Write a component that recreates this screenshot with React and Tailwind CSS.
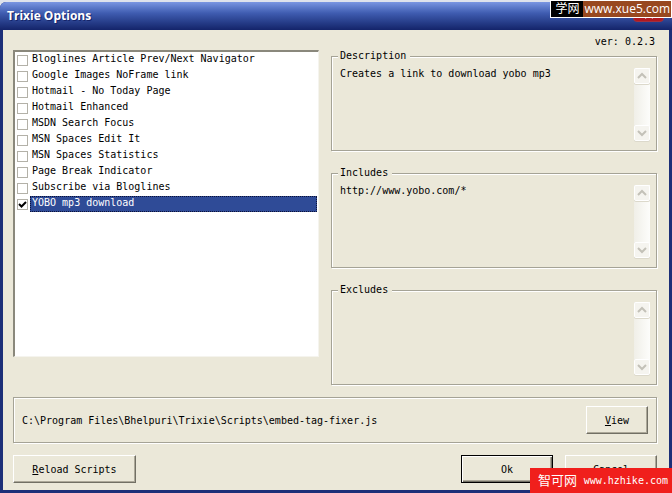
import { useState } from "react";

const SCRIPTS = [
  "Bloglines Article Prev/Next Navigator",
  "Google Images NoFrame link",
  "Hotmail - No Today Page",
  "Hotmail Enhanced",
  "MSDN Search Focus",
  "MSN Spaces Edit It",
  "MSN Spaces Statistics",
  "Page Break Indicator",
  "Subscribe via Bloglines",
  "YOBO mp3 download",
];

// Disabled scroll bar button, the arrow points up or down
function ScrollArrow({ down, label }) {
  return (
    <button
      type="button"
      disabled
      aria-label={label}
      className="flex h-4 w-4 items-center justify-center rounded-xs border border-white bg-[#f5f4ef] shadow-[0_1px_0_#dcd9cb]"
    >
      <svg width="10" height="8" viewBox="0 0 10 8" fill="none" stroke="#c3c1b8" strokeWidth="2">
        <path d={down ? "M1 2l4 4 4-4" : "M1 6l4-4 4 4"} />
      </svg>
    </button>
  );
}

/**
 * Etched group box with a read-only text and a disabled scroll bar.
 */
function GroupBox({ title, text }) {
  return (
    <fieldset className="flex-1 border border-[#a5a396] px-1.5 pb-[9px] shadow-[1px_1px_0_#fff,inset_1px_1px_0_#fff]">
      <legend className="bg-[#ebe8d9] pr-1 pl-0.5 leading-3">{title}</legend>
      <div className="flex pt-1.5 pl-0.5">
        <textarea
          readOnly
          aria-label={title}
          value={text}
          className="min-w-0 flex-1 resize-none overflow-hidden leading-3 outline-none"
        />
        <div className="flex h-[73px] w-4 flex-col justify-between bg-linear-to-r from-[#f0efe8] to-[#fdfdfb]">
          <ScrollArrow label={`Scroll ${title} up`} />
          <ScrollArrow down label={`Scroll ${title} down`} />
        </div>
      </div>
    </fieldset>
  );
}

// Classic raised push button
function PushButton({ children, className, isDefault }) {
  return (
    <button
      type="button"
      className={`h-7 border ${
        isDefault
          ? "border-black shadow-[inset_1px_1px_0_#fff,inset_-1px_-1px_0_#716f64,inset_-2px_-2px_0_#aca899]"
          : "border-t-white border-l-white border-r-[#716f64] border-b-[#716f64] shadow-[inset_-1px_-1px_0_#aca899]"
      } ${className}`}
    >
      {children}
    </button>
  );
}

export default function App() {
  const [enabled, setEnabled] = useState(["YOBO mp3 download"]);
  const [selected, setSelected] = useState("YOBO mp3 download");

  const toggle = (name) => {
    setSelected(name);
    setEnabled((list) =>
      list.includes(name) ? list.filter((n) => n !== name) : [...list, name]
    );
  };

  return (
    <div className="relative flex min-h-screen flex-col bg-[#dfe3ec] pt-0.5 font-['DejaVu_Sans_Mono','Noto_Sans_CJK_SC',monospace] text-[10px] text-black">
      {/* Window frame */}
      <div className="flex flex-1 flex-col rounded-t-md bg-[#1c2f78]">
        <header className="flex h-7 items-center justify-between rounded-t-md bg-linear-to-b from-[#7a96e2] via-[#3f5cb0] via-40% to-[#14246a] pr-2 pl-[7px]">
          <h1 className="font-['Open_Sans',sans-serif] text-[12px] font-bold text-white [text-shadow:1px_1px_0_#14246a]">
            Trixie Options
          </h1>
          <button
            type="button"
            aria-label="Close"
            className="mt-1 flex h-4 w-[31px] items-center justify-center self-start rounded-sm border border-[#a03040] bg-[#b01820]"
          >
            <svg width="10" height="10" viewBox="0 0 10 10" stroke="#fff" strokeWidth="2">
              <path d="M1 1l8 8M9 1l-8 8" />
            </svg>
          </button>
        </header>

        <main className="mx-[3px] mb-[3px] flex flex-1 flex-col bg-[#ebe8d9] pt-1 pr-3 pb-1.5 pl-2.5">
          <p className="pr-0.5 text-right leading-4">ver: 0.2.3</p>

          <div className="grid grid-cols-[306fr_326fr] gap-3">
            {/* Script list */}
            <ul className="mb-7 border-t-2 border-r border-b border-l-2 border-t-[#8a887c] border-r-[#f5f4ee] border-b-[#f5f4ee] border-l-[#8a887c] bg-white">
              {SCRIPTS.map((name) => (
                <li key={name}>
                  <label className="flex h-4 items-center gap-0.5 pr-px pl-0.5">
                    <span className="grid">
                      <input
                        type="checkbox"
                        checked={enabled.includes(name)}
                        onChange={() => toggle(name)}
                        className="peer col-start-1 row-start-1 size-[11px] appearance-none border border-[#b3b1a8] bg-white"
                      />
                      <svg
                        className="pointer-events-none invisible col-start-1 row-start-1 peer-checked:visible"
                        width="11"
                        height="11"
                        viewBox="0 0 11 11"
                        fill="none"
                        stroke="#000"
                        strokeWidth="2"
                      >
                        <path d="M2 5l2.500 2.500L9 3" />
                      </svg>
                    </span>
                    <span
                      className={`flex-1 border px-px pb-0.5 leading-3 ${
                        name === selected
                          ? "border-dotted border-[#0c1238] bg-[#2f4b97] text-white"
                          : "border-transparent"
                      }`}
                    >
                      {name}
                    </span>
                  </label>
                </li>
              ))}
            </ul>

            <div className="flex flex-col gap-4">
              <GroupBox title="Description" text="Creates a link to download yobo mp3" />
              <GroupBox title="Includes" text="http://www.yobo.com/*" />
              <GroupBox title="Excludes" text="" />
            </div>
          </div>

          {/* Path of the selected script */}
          <section className="mt-3 flex items-center justify-between border border-[#a5a396] py-2 pr-2 pl-2 shadow-[1px_1px_0_#fff,inset_1px_1px_0_#fff]">
            <p>C:\Program Files\Bhelpuri\Trixie\Scripts\embed-tag-fixer.js</p>
            <PushButton className="w-[62px]">
              <u>V</u>iew
            </PushButton>
          </section>

          <footer className="mt-3 flex gap-3">
            <PushButton className="mr-auto w-[123px]">
              <u>R</u>eload Scripts
            </PushButton>
            <PushButton isDefault className="w-[92px]">
              Ok
            </PushButton>
            <PushButton className="w-[92px]">Cancel</PushButton>
          </footer>
        </main>
      </div>

      {/* Site badges lying over the window */}
      <a
        href="#xue5"
        className="absolute top-0 right-0 flex border border-white bg-[#98481f] font-['Open_Sans','Noto_Sans_CJK_SC',sans-serif] text-[12px] leading-4 text-white"
      >
        <span className="bg-black px-1">学网</span>
        <span className="px-px">www.xue5.com</span>
      </a>
      <a
        href="#hzhike"
        className="absolute right-0 bottom-0 flex h-[25px] w-[142px] items-center justify-between bg-[#f01f1c] pr-1 pl-2 text-white"
      >
        <span className="text-[13px]">智可网</span>
        <span>www.hzhike.com</span>
      </a>
    </div>
  );
}
